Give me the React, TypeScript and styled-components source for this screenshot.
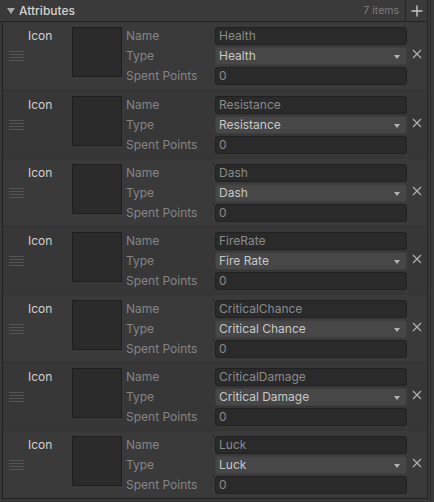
import React from 'react';
import styled, { createGlobalStyle } from 'styled-components';

const GlobalStyle = createGlobalStyle`
  body {
    margin: 0;
    background: #383838;
    font-family: Inter, "Noto Sans", "Liberation Sans", sans-serif;
    font-size: 12px;
  }
`;

const Panel = styled.div`
  width: 431px;
  height: 502px;
  box-sizing: border-box;
  border-right: 1px solid #2b2b2b;
  background: #383838;
`;

const List = styled.div`
  width: 428px;
`;

const Header = styled.div`
  height: 21px;
  display: flex;
  align-items: center;
  background: #3a3a3a;
  border-bottom: 1px solid #232323;
  border-right: 1px solid #262626;
  color: #d2d2d2;
`;

const Foldout = styled.span`
  width: 0;
  height: 0;
  margin: 1px 4px 0 7px;
  border-left: 4px solid transparent;
  border-right: 4px solid transparent;
  border-top: 6px solid #a8a8a8;
`;

const Title = styled.span`
  flex: 1;
  font-size: 12px;
  font-weight: 500;
`;

const Count = styled.span`
  font-size: 10.5px;
  color: #7e7e7e;
  padding-right: 6px;
`;

const AddButton = styled.div`
  width: 21px;
  height: 21px;
  border-left: 1px solid #262626;
  display: flex;
  align-items: center;
  justify-content: center;
`;

const Body = styled.div`
  margin-left: 2px;
  border-left: 1px solid #232323;
  border-right: 1px solid #232323;
  border-bottom: 1px solid #232323;
`;

const Row = styled.div<{ $odd: boolean }>`
  height: 68px;
  box-sizing: border-box;
  padding: 5px 0;
  display: flex;
  align-items: flex-start;
  background: ${(p) => (p.$odd ? '#3a3a3a' : '#373737')};
  border-top: 1px solid ${(p) => (p.$odd ? '#333333' : '#303030')};
  &:first-child {
    border-top: none;
  }
`;

const Handle = styled.div`
  width: 25px;
  align-self: center;
  display: flex;
  flex-direction: column;
  gap: 2px;
  padding-left: 6px;
  box-sizing: border-box;
  & > i {
    display: block;
    width: 15px;
    height: 1px;
    background: #555555;
  }
`;

const IconLabel = styled.div`
  width: 44px;
  line-height: 18px;
  color: #d2d2d2;
`;

const IconBox = styled.div`
  width: 50px;
  height: 50px;
  box-sizing: border-box;
  background: #2b2b2b;
  border: 1px solid #1f1f1f;
  margin-right: 4px;
`;

const Fields = styled.div`
  display: grid;
  grid-template-columns: 89px 192px;
  row-gap: 2px;
`;

const Label = styled.div`
  line-height: 18px;
  color: #858585;
`;

const Field = styled.div`
  height: 18px;
  box-sizing: border-box;
  border: 1px solid #212121;
  border-radius: 3px;
  background: #2a2a2a;
  color: #8a8a8a;
  padding-left: 3px;
  line-height: 16px;
`;

const Dropdown = styled.div`
  height: 18px;
  box-sizing: border-box;
  border-radius: 3px;
  background: #474747;
  border: 1px solid #3f3f3f;
  color: #c8c8c8;
  padding: 0 6px 0 3px;
  line-height: 16px;
  display: flex;
  align-items: center;
  justify-content: space-between;
  &::after {
    content: '';
    border-left: 3.5px solid transparent;
    border-right: 3.5px solid transparent;
    border-top: 4px solid #b4b4b4;
    margin-top: 1px;
  }
`;

const Remove = styled.div`
  width: 20px;
  height: 18px;
  margin-top: 18px;
  display: flex;
  align-items: center;
  justify-content: center;
`;

const items = [
  ['Health', 'Health'],
  ['Resistance', 'Resistance'],
  ['Dash', 'Dash'],
  ['FireRate', 'Fire Rate'],
  ['CriticalChance', 'Critical Chance'],
  ['CriticalDamage', 'Critical Damage'],
  ['Luck', 'Luck'],
];

export default function App(): JSX.Element {
  return (
    <Panel>
      <GlobalStyle />
      <List>
        <Header>
          <Foldout />
          <Title>Attributes</Title>
          <Count>{items.length} items</Count>
          <AddButton>
            <svg width="12" height="12" viewBox="0 0 12 12">
              <path d="M6 0.5V11.5M0.5 6H11.5" stroke="#c8c8c8" strokeWidth="1.4" />
            </svg>
          </AddButton>
        </Header>
        <Body>
          {items.map(([name, type], i) => (
            <Row key={name} $odd={i % 2 === 0}>
              <Handle>
                <i />
                <i />
                <i />
                <i />
              </Handle>
              <IconLabel>Icon</IconLabel>
              <IconBox />
              <Fields>
                <Label>Name</Label>
                <Field>{name}</Field>
                <Label>Type</Label>
                <Dropdown>{type}</Dropdown>
                <Label>Spent Points</Label>
                <Field>0</Field>
              </Fields>
              <Remove>
                <svg width="10" height="10" viewBox="0 0 10 10">
                  <path d="M1 1L9 9M9 1L1 9" stroke="#b4b4b4" strokeWidth="1.1" />
                </svg>
              </Remove>
            </Row>
          ))}
        </Body>
      </List>
    </Panel>
  );
}
